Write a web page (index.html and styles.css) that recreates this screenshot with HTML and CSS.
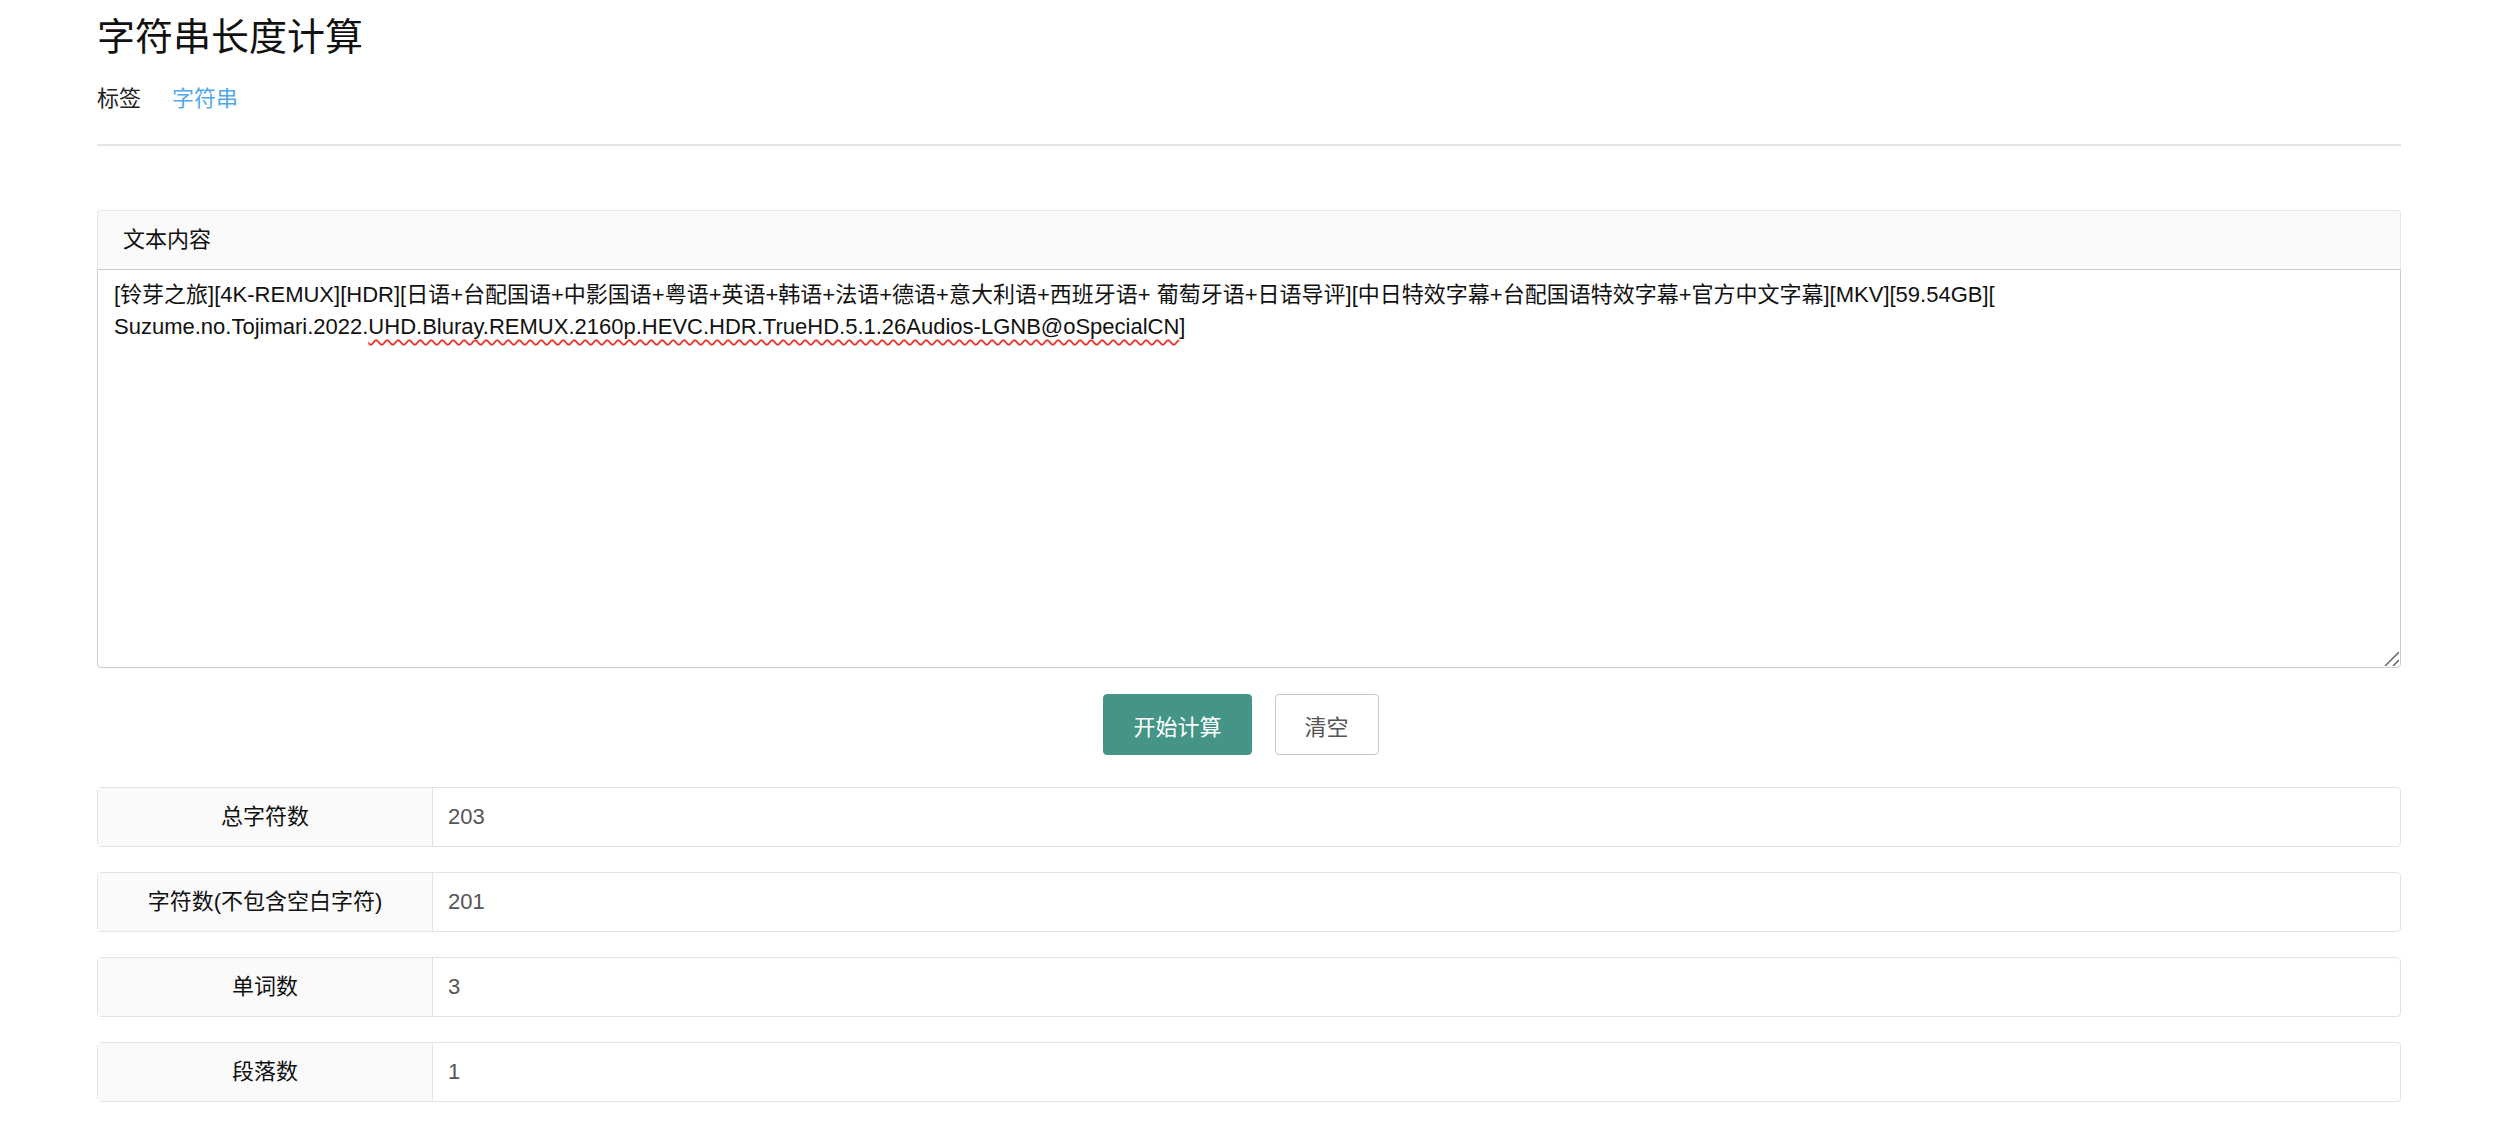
FILE: index.html
```html
<!DOCTYPE html>
<html lang="zh-CN">
<head>
    <meta charset="UTF-8">
    <meta name="viewport" content="width=device-width, initial-scale=1.0">
    <title>字符串长度计算</title>
    <link rel="stylesheet" href="styles.css">
</head>
<body>
    <div class="page">
        <h1 class="title">字符串长度计算</h1>
        <nav class="tabs">
            <a class="tab">标签</a>
            <a class="tab active">字符串</a>
        </nav>

        <section class="panel">
            <div class="panel-head">文本内容</div>
            <div class="textbox" role="textbox" contenteditable="true" spellcheck="false">
                <div class="line">[铃芽之旅][4K-REMUX][HDR][日语+台配国语+中影国语+粤语+英语+韩语+法语+德语+意大利语+西班牙语+ 葡萄牙语+日语导评][中日特效字幕+台配国语特效字幕+官方中文字幕][MKV][59.54GB][</div>
                <div class="line"><span>Suzume.no.Tojimari.2022.</span><span class="typo">UHD.Bluray.REMUX.2160p.HEVC.HDR.TrueHD.5.1.26Audios-LGNB@oSpecialCN</span><span>]</span></div>
            </div>
            <svg class="grip" width="16" height="16" viewBox="0 0 16 16">
                <path d="M2 16 L16 2 M10 16 L16 10" stroke="#6f6f6f" stroke-width="1.6" fill="none"/>
            </svg>
        </section>

        <div class="actions">
            <button class="btn btn-primary">开始计算</button>
            <button class="btn">清空</button>
        </div>

        <div class="results">
            <div class="row">
                <div class="row-label">总字符数</div>
                <div class="row-value">203</div>
            </div>
            <div class="row">
                <div class="row-label">字符数(不包含空白字符)</div>
                <div class="row-value">201</div>
            </div>
            <div class="row">
                <div class="row-label">单词数</div>
                <div class="row-value">3</div>
            </div>
            <div class="row">
                <div class="row-label">段落数</div>
                <div class="row-value">1</div>
            </div>
        </div>
    </div>
</body>
</html>
```

FILE: styles.css
```css
body {
    margin: 0;
    font-family: "Liberation Sans", "Noto Sans CJK SC", sans-serif;
    color: #111;
    background: #fff;
}
.page {
    width: 2304px;
    margin-left: 97px;
}
.title {
    margin: 10px 0 0;
    font-size: 38px;
    font-weight: normal;
    line-height: 54px;
    color: #111;
}
.tabs {
    display: flex;
    gap: 31px;
    margin-top: 18px;
    padding-bottom: 28px;
    border-bottom: 2px solid #e5e5e5;
    font-size: 22px;
    line-height: 34px;
}
.tab {
    color: #222;
    cursor: pointer;
}
.tab.active {
    color: #52a8eb;
}
.panel {
    position: relative;
    margin-top: 64px;
}
.panel-head {
    height: 58px;
    padding-left: 25px;
    line-height: 58px;
    font-size: 22px;
    color: #111;
    background: #fafafa;
    border: 1px solid #e5e5e5;
    border-bottom: none;
    border-radius: 4px 4px 0 0;
}
.textbox {
    box-sizing: border-box;
    height: 399px;
    padding: 9px 16px;
    font-size: 22px;
    line-height: 32px;
    color: #111;
    border: 1px solid #cdcdcd;
    border-radius: 0 0 4px 4px;
    outline: none;
    overflow: auto;
}
.typo {
    text-decoration: underline wavy #e8392c;
    text-decoration-thickness: 2px;
    text-underline-offset: 5px;
}
.grip {
    position: absolute;
    right: 2px;
    bottom: 2px;
}
.actions {
    display: flex;
    justify-content: center;
    gap: 23px;
    margin-top: 26px;
    padding-right: 16px;
}
.btn {
    height: 61px;
    padding: 0 29px;
    font-family: inherit;
    font-size: 22px;
    color: #555;
    background: #fff;
    border: 1px solid #c6c6c6;
    border-radius: 4px;
    cursor: pointer;
}
.btn-primary {
    color: #fff;
    background: #449488;
    border-color: #449488;
}
.results {
    display: flex;
    flex-direction: column;
    gap: 25px;
    margin-top: 32px;
}
.row {
    display: flex;
    height: 60px;
    box-sizing: border-box;
    border: 1px solid #e3e3e3;
    border-radius: 4px;
    font-size: 22px;
    line-height: 58px;
}
.row-label {
    width: 334px;
    text-align: center;
    color: #111;
    background: #fafafa;
    border-right: 1px solid #e3e3e3;
}
.row-value {
    padding-left: 15px;
    color: #555;
}
```
